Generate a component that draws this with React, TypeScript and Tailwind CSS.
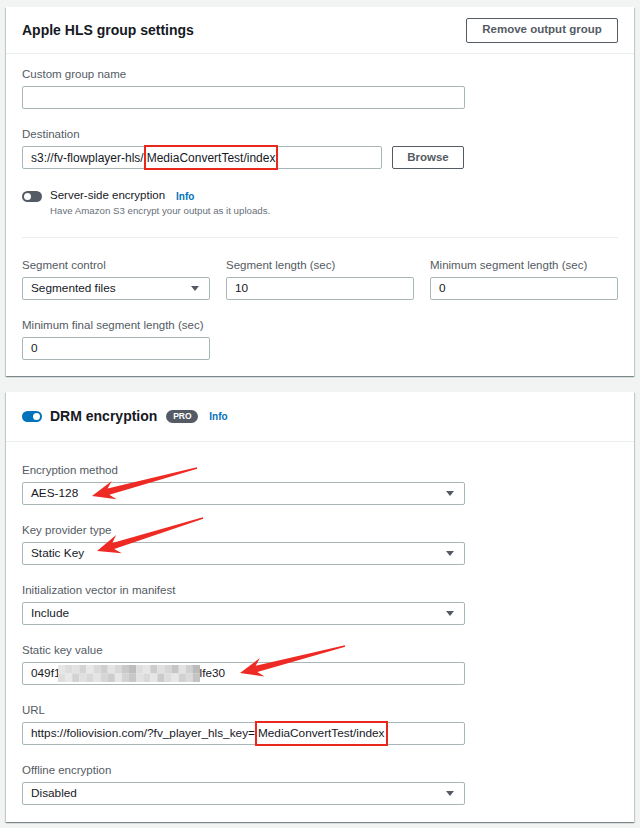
import type { ReactNode } from 'react';

const font = "font-['Liberation_Sans',Arial,sans-serif]";

function Field({ label, className = '', children }: { label: string; className?: string; children: ReactNode }) {
  return (
    <div className={className}>
      <div className="mb-1 h-4 text-[11.5px] leading-4 text-[#545b64]">{label}</div>
      {children}
    </div>
  );
}

function TextBox({ className = '', children }: { className?: string; children?: ReactNode }) {
  return (
    <div
      className={`flex h-[23px] items-center whitespace-nowrap rounded-[2px] border border-[#aab7b8] bg-white px-2 text-[11.8px] text-[#16191f] ${className}`}
    >
      {children}
    </div>
  );
}

function Caret() {
  return (
    <svg width="8" height="5" viewBox="0 0 8 5" className="shrink-0">
      <polygon points="0,0 8,0 4,5" fill="#545b64" />
    </svg>
  );
}

function Select({ value, className = 'w-[443px]' }: { value: string; className?: string }) {
  return (
    <TextBox className={`justify-between pr-[10px] ${className}`}>
      <span>{value}</span>
      <Caret />
    </TextBox>
  );
}

// red rectangle drawn over part of a value in the screenshot
function Boxed({ children }: { children: ReactNode }) {
  return (
    <span className="-my-[2px] flex items-center self-stretch border-2 border-[#e8271d] px-[1px]">
      {children}
    </span>
  );
}

function Toggle({ on }: { on: boolean }) {
  return (
    <div
      className={`flex h-[11px] w-5 items-center rounded-full px-[2px] ${
        on ? 'justify-end bg-[#0073bb]' : 'justify-start bg-[#545b64]'
      }`}
    >
      <div className="h-[7px] w-[7px] rounded-full bg-white" />
    </div>
  );
}

function Info() {
  return <span className="text-[10px] font-bold text-[#0073bb]">Info</span>;
}

// pixelated (redacted) part of the key
const shades = [
  ['#e6e6e6', '#dcdcdc', '#e2e2e2', '#d4d4d4', '#e8e8e8', '#dadada', '#cfcfcf', '#e4e4e4', '#d8d8d8', '#c9c9c9', '#bdbdbd', '#dedede', '#e6e6e6', '#cccccc', '#e0e0e0', '#d6d6d6', '#c6c6c6', '#e3e3e3', '#d0d0d0', '#bbbbbb'],
  ['#dedede', '#e8e8e8', '#d2d2d2', '#e0e0e0', '#d8d8d8', '#e4e4e4', '#d6d6d6', '#cdcdcd', '#e6e6e6', '#d3d3d3', '#c8c8c8', '#e2e2e2', '#d9d9d9', '#e5e5e5', '#cbcbcb', '#dddddd', '#e7e7e7', '#d1d1d1', '#dbdbdb', '#c4c4c4'],
];

function Pixelated() {
  return (
    <svg width="142" height="17" viewBox="0 0 142 17" className="-ml-[3px] shrink-0">
      {shades.map((row, r) =>
        row.map((c, i) => <rect key={`${r}-${i}`} x={i * 7.1} y={r * 8.5} width="7.2" height="8.6" fill={c} />)
      )}
    </svg>
  );
}

function arrowPoints(tx: number, ty: number, hx: number, hy: number) {
  const dx = tx - hx;
  const dy = ty - hy;
  const len = Math.hypot(dx, dy);
  const ux = dx / len;
  const uy = dy / len;
  const nx = -uy;
  const ny = ux;
  const p = (a: number, b: number) => `${(hx + ux * a + nx * b).toFixed(1)},${(hy + uy * a + ny * b).toFixed(1)}`;
  return [p(0, 0), p(23, 9.5), p(17, 3.2), p(len, 0.8), p(len, -0.8), p(17, -3.2), p(23, -9.5)].join(' ');
}

const arrows = [
  [197, 468, 92, 496],
  [203, 518, 97, 551],
  [345, 646, 240, 673],
];

const card =
  'bg-white shadow-[0_1px_1px_0_rgba(0,28,36,0.3),1px_1px_1px_0_rgba(0,28,36,0.15),-1px_1px_1px_0_rgba(0,28,36,0.15)]';

export default function App() {
  return (
    <div className={`relative min-h-[828px] bg-[#f2f3f3] px-[6px] pb-[6px] pt-[7px] ${font}`}>
      {/* Apple HLS group settings */}
      <div className={card}>
        <div className="flex h-[47px] items-center justify-between border-b border-[#eaeded] px-4">
          <h2 className="text-[14px] font-bold text-[#16191f]">Apple HLS group settings</h2>
          <button className="h-[25px] w-[152px] rounded-[2px] border border-[#545b64] bg-white text-[11.5px] font-bold text-[#545b64]">
            Remove output group
          </button>
        </div>
        <div className="px-4 pb-4 pt-3">
          <Field label="Custom group name">
            <TextBox className="w-[443px]" />
          </Field>
          <Field label="Destination" className="mt-[17px]">
            <div className="flex gap-[10px]">
              <TextBox className="w-[360px] text-[12px]">
                s3://fv-flowplayer-hls/<Boxed>MediaConvertTest/index</Boxed>
              </TextBox>
              <button className="h-[23px] w-[72px] rounded-[2px] border border-[#545b64] bg-white text-[11.5px] font-bold text-[#545b64]">
                Browse
              </button>
            </div>
          </Field>
          <div className="mt-[19px] flex gap-2">
            <div className="flex h-4 items-center">
              <Toggle on={false} />
            </div>
            <div>
              <div className="flex h-4 items-center gap-[11px] text-[11.5px] text-[#16191f]">
                <span>Server-side encryption</span>
                <Info />
              </div>
              <div className="text-[9.7px] leading-[13px] text-[#687078]">
                Have Amazon S3 encrypt your output as it uploads.
              </div>
            </div>
          </div>
          <div className="mt-5 border-t border-[#eaeded]" />
          <div className="grid grid-cols-3 gap-x-4 pt-[19px]">
            <Field label="Segment control">
              <Select value="Segmented files" className="w-full" />
            </Field>
            <Field label="Segment length (sec)">
              <TextBox>10</TextBox>
            </Field>
            <Field label="Minimum segment length (sec)">
              <TextBox>0</TextBox>
            </Field>
          </div>
          <Field label="Minimum final segment length (sec)" className="mt-[17px] w-[188px]">
            <TextBox>0</TextBox>
          </Field>
        </div>
      </div>

      {/* DRM encryption */}
      <div className={`mt-4 ${card}`}>
        <div className="flex h-[50px] items-center border-b border-[#eaeded] px-4">
          <Toggle on />
          <h2 className="ml-2 text-[14px] font-bold text-[#16191f]">DRM encryption</h2>
          <span className="ml-[9px] flex h-[13px] w-8 items-center justify-center rounded-full bg-[#545b64] text-[8.5px] font-bold text-white">
            PRO
          </span>
          <span className="ml-[11px] flex items-center">
            <Info />
          </span>
        </div>
        <div className="px-4 pb-[17px] pt-5">
          <Field label="Encryption method">
            <Select value="AES-128" />
          </Field>
          <Field label="Key provider type" className="mt-[17px]">
            <Select value="Static Key" />
          </Field>
          <Field label="Initialization vector in manifest" className="mt-[17px]">
            <Select value="Include" />
          </Field>
          <Field label="Static key value" className="mt-[17px]">
            <TextBox className="w-[443px]">
              <span>049f1</span>
              <Pixelated />
              <span>lfe30</span>
            </TextBox>
          </Field>
          <Field label="URL" className="mt-[17px]">
            <TextBox className="w-[443px]">
              https://foliovision.com/?fv_player_hls_key=<Boxed>MediaConvertTest/index</Boxed>
            </TextBox>
          </Field>
          <Field label="Offline encryption" className="mt-[17px]">
            <Select value="Disabled" />
          </Field>
        </div>
      </div>

      {/* annotation arrows */}
      <svg className="pointer-events-none absolute inset-0" width="640" height="828" viewBox="0 0 640 828">
        {arrows.map(([tx, ty, hx, hy], i) => (
          <polygon key={i} points={arrowPoints(tx, ty, hx, hy)} fill="#ee2a24" />
        ))}
      </svg>
    </div>
  );
}
